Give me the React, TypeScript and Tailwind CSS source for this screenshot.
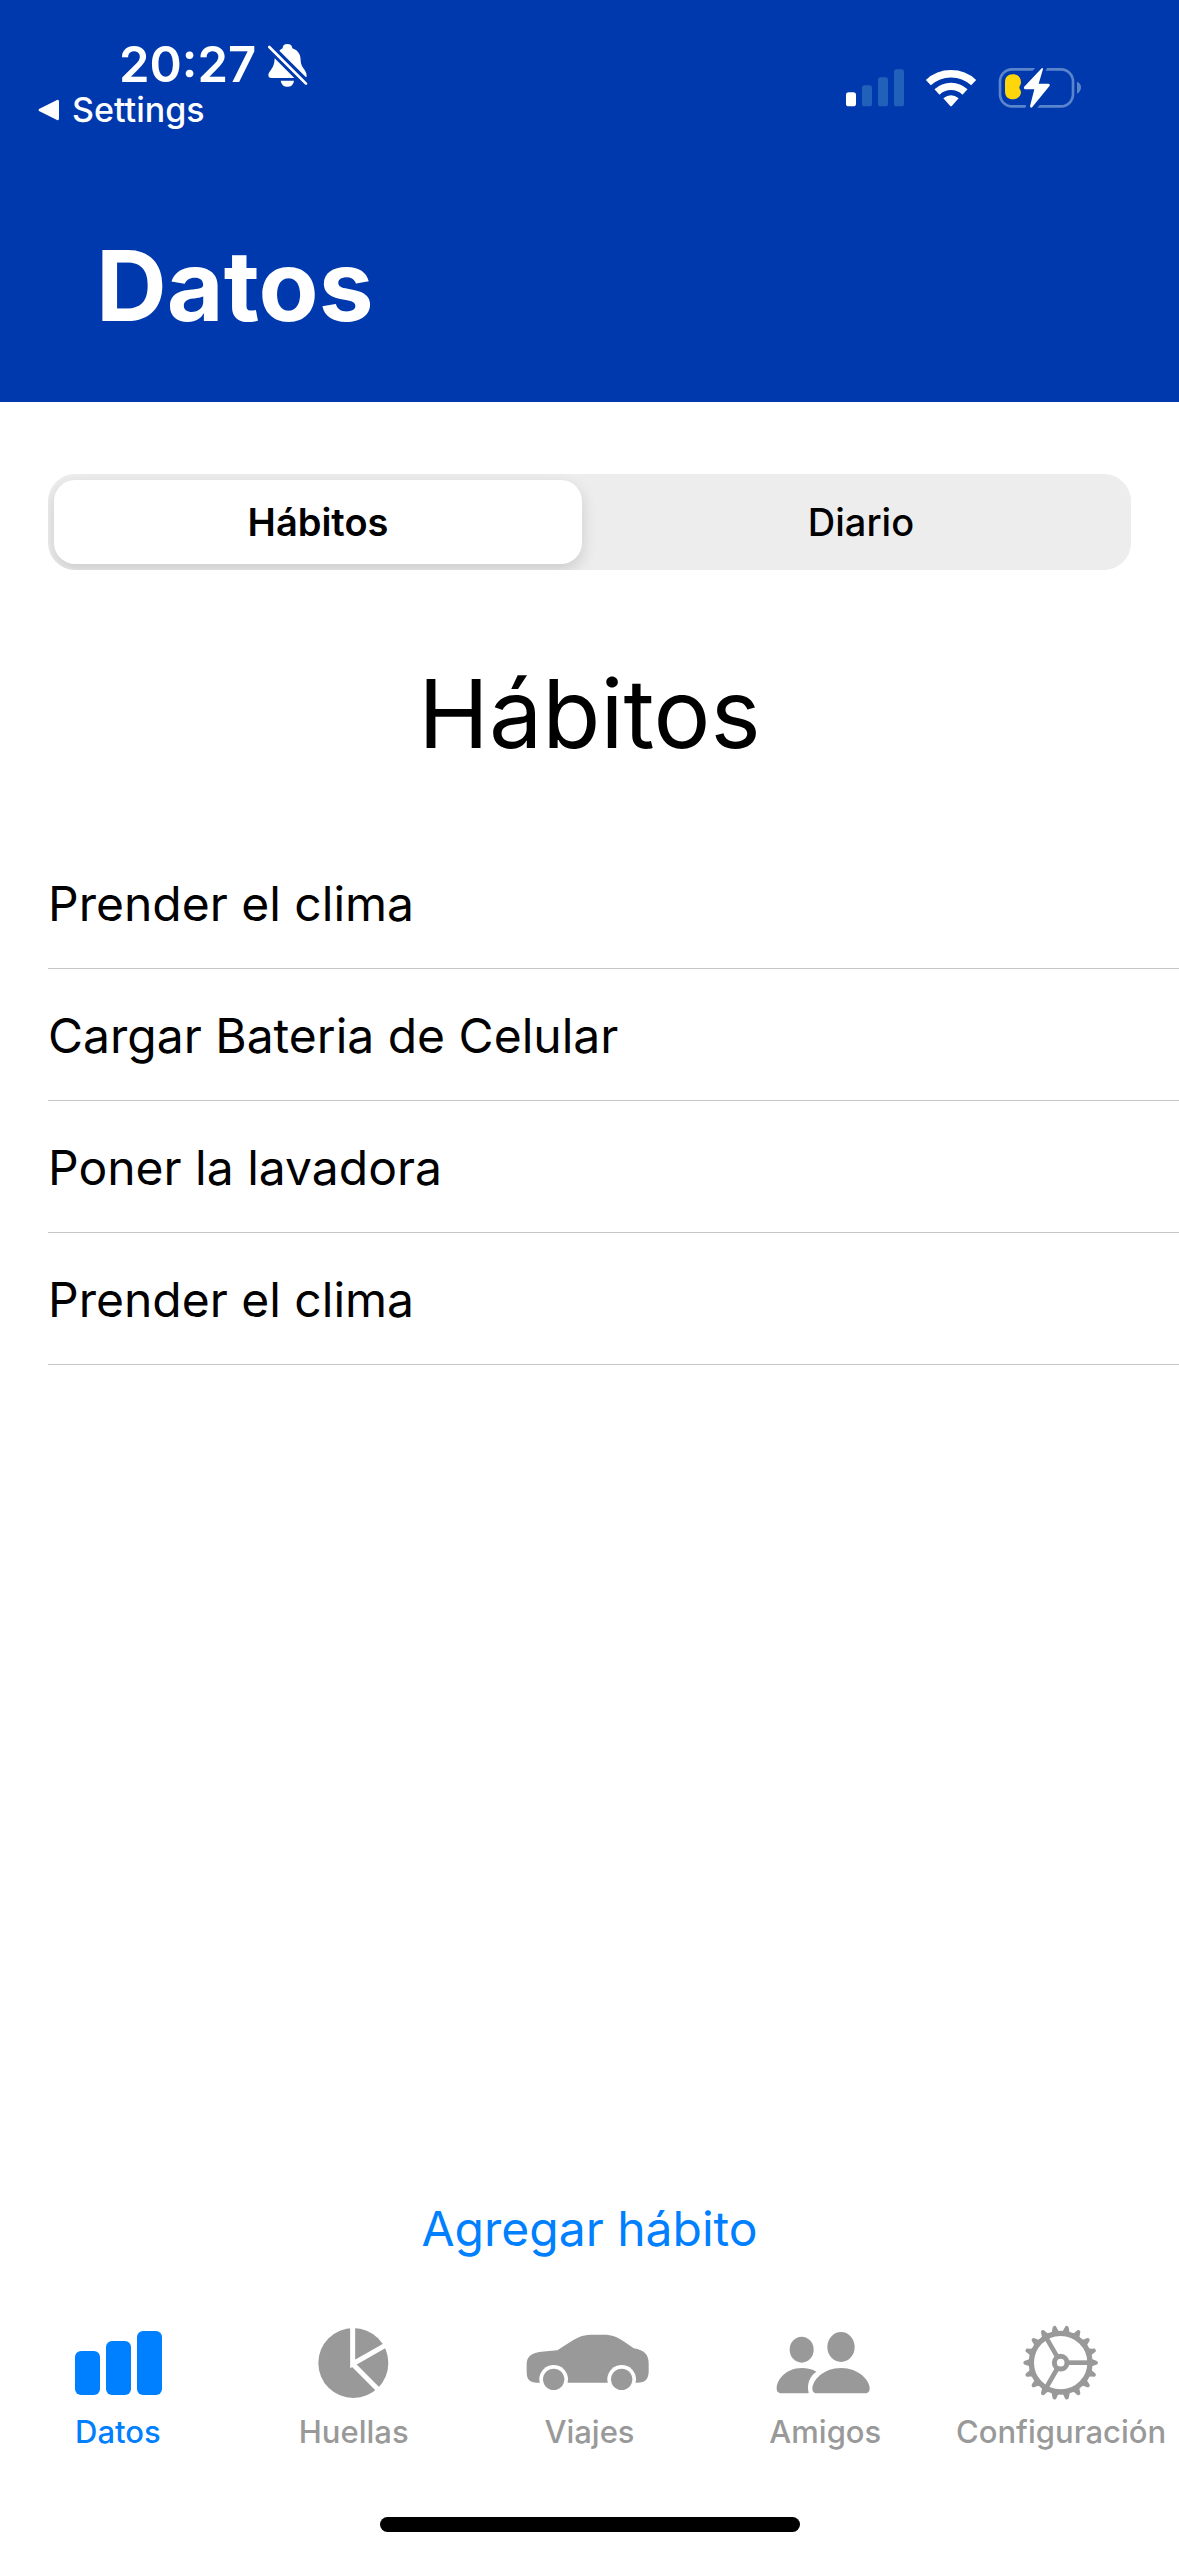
import { useState } from "react";
import type { ReactNode } from "react";

const HEADER_BLUE = "#0039ad";

function BellOffIcon() {
  return (
    <svg viewBox="800 66 129 138" className="h-[46px] w-[43px]" fill="currentColor" aria-hidden="true">
      <path d="M840 92Q845 87 850 85Q850 72 864 72Q878 72 879 85C898 92 904 105 904 122C905 145 922 148 922 168Q922 171 920 172Z" />
      <path d="M826 115L885 174H816Q807 174 807 165C808 152 825 148 826 115Z" />
      <path d="M844 182H884Q882 200 864 200Q847 200 844 182Z" />
      <path d="M810 81L920 191" stroke="currentColor" strokeWidth="8" strokeLinecap="round" />
    </svg>
  );
}

function SignalIcon() {
  return (
    <svg viewBox="78 50 174 126" className="h-[42px] w-[58px]" role="img" aria-label="Señal móvil">
      <rect x="78" y="126" width="30" height="42" rx="8" fill="#fff" />
      <g fill="#2161b9">
        <rect x="126" y="105" width="30" height="63" rx="8" />
        <rect x="174" y="81" width="30" height="87" rx="8" />
        <rect x="222" y="57" width="30" height="111" rx="8" />
      </g>
    </svg>
  );
}

function WifiIcon() {
  return (
    <svg viewBox="316 50 156 126" className="h-[42px] w-[52px]" role="img" aria-label="Wi-Fi">
      <g fill="none" stroke="#fff" strokeWidth="22">
        <path d="M326 97A100 100 0 0 1 462 97" />
        <path d="M352 125A61 61 0 0 1 436 125" />
      </g>
      <path d="M371 144Q394 125 417 144L397 166Q394 169 391 166Z" fill="#fff" />
    </svg>
  );
}

function BatteryIcon() {
  const bolt = "M665 54L612 110Q610 115 615 117H643L630 168Q632 175 637 170L689 106Q691 101 686 100H656L669 56Q668 52 665 54Z";
  return (
    <svg viewBox="534 50 252 126" className="h-[42px] w-[84px]" role="img" aria-label="Batería cargando">
      <rect x="540" y="57" width="219" height="111" rx="36" fill="none" stroke="#5a85cc" strokeWidth="8" />
      <path d="M771 94Q783 99 783 111Q783 124 771 130Z" fill="#5a85cc" />
      <path d="M579 72C594 72 603 82 603 96C603 104 598 106 598 112C598 117 603 118 603 126C602 138 593 147 579 147C563 147 555 138 555 122V97C555 81 563 72 579 72Z" fill="#ffd60a" />
      <g fill={HEADER_BLUE}>
        <path d="M648 50H682L676 64H636Z" />
        <path d="M619 160H662L650 175H616Z" />
      </g>
      <path d={bolt} fill="#fff" />
    </svg>
  );
}

function BarsIcon() {
  return (
    <svg viewBox="24 72 360 240" className="h-20 w-[120px]" fill="currentColor" aria-hidden="true">
      <rect x="75" y="153" width="75" height="132" rx="18" />
      <rect x="168" y="123" width="75" height="162" rx="18" />
      <rect x="261" y="93" width="75" height="192" rx="18" />
    </svg>
  );
}

function PieIcon() {
  return (
    <svg viewBox="731 72 360 240" className="h-20 w-[120px]" fill="currentColor" aria-hidden="true">
      <circle cx="909" cy="189" r="105" />
      <path d="M907 75V192L1010 133M907 192L990 275" fill="none" stroke="#fff" strokeWidth="15" />
    </svg>
  );
}

function CarIcon() {
  return (
    <svg viewBox="58 72 420 240" className="h-20 w-[140px]" fill="currentColor" aria-hidden="true">
      <path d="M81 192C81 168 98 158 125 155L173 151L215 124C240 108 252 104 285 104H310C340 104 352 110 375 126L402 145C435 150 447 165 447 190V213C447 238 437 248 413 248H112C91 248 81 239 81 216Z" />
      <circle cx="162" cy="238" r="43" fill="#fff" />
      <circle cx="366" cy="238" r="43" fill="#fff" />
      <circle cx="162" cy="238" r="32" />
      <circle cx="366" cy="238" r="32" />
    </svg>
  );
}

function PeopleIcon() {
  return (
    <svg viewBox="796 72 360 240" className="h-20 w-[120px]" fill="currentColor" aria-hidden="true">
      <ellipse cx="906" cy="149" rx="36" ry="39" />
      <ellipse cx="1024" cy="141" rx="41" ry="45" />
      <path d="M906 204Q932 204 950 215Q918 238 927 280H849Q831 280 831 266C831 238 860 204 906 204Z" />
      <path d="M1024 204C1078 204 1110 242 1110 266Q1110 280 1093 280H954Q938 280 938 266C938 242 970 204 1024 204Z" />
    </svg>
  );
}

function GearIcon() {
  const teeth = Array.from({ length: 18 }, (_, i) => i * 20);
  return (
    <svg viewBox="-179 -116 360 240" className="h-20 w-[120px]" fill="currentColor" aria-hidden="true">
      {teeth.map((angle) => (
        <path
          key={angle}
          transform={`rotate(${angle})`}
          d="M88 -16Q93 -9 107 -6Q112 -5 112 0Q112 5 107 6Q93 9 88 16Z"
        />
      ))}
      <g fill="none" stroke="currentColor">
        <circle r="88" strokeWidth="16" />
        <circle r="19" strokeWidth="15" />
        {[0, 120, 240].map((angle) => (
          <path key={angle} transform={`rotate(${angle})`} d="M22 0H86" strokeWidth="14" />
        ))}
      </g>
    </svg>
  );
}

const habits = ["Prender el clima", "Cargar Bateria de Celular", "Poner la lavadora", "Prender el clima"];

const tabs: { label: string; icon: ReactNode }[] = [
  { label: "Datos", icon: <BarsIcon /> },
  { label: "Huellas", icon: <PieIcon /> },
  { label: "Viajes", icon: <CarIcon /> },
  { label: "Amigos", icon: <PeopleIcon /> },
  { label: "Configuración", icon: <GearIcon /> },
];

const segments = ["Hábitos", "Diario"];

export default function App() {
  const [segment, setSegment] = useState("Hábitos");

  return (
    <div className="flex min-h-screen flex-col bg-white font-['Inter',sans-serif] text-black">
      <header className="bg-[#0039ad] pb-14 text-white">
        <div className="flex items-start justify-between pr-[97px]">
          <div className="pt-10">
            <div className="flex items-center gap-2.5 pl-[119px]">
              <time className="text-[49px] leading-[50px] font-semibold">20:27</time>
              <BellOffIcon />
            </div>
            <a href="#settings" className="flex items-center gap-3 pl-[38px] text-[34px] leading-10 font-medium">
              <svg viewBox="0 0 22 22" className="size-[22px]" fill="currentColor" aria-hidden="true">
                <path d="M1 10L19 1Q21 0 21 3V19Q21 22 19 21L1 12Q0 11 1 10Z" />
              </svg>
              Settings
            </a>
          </div>
          <div className="flex gap-[21px] pt-[67px]">
            <SignalIcon />
            <WifiIcon />
            <BatteryIcon />
          </div>
        </div>
        <h1 className="mt-24 pl-24 text-[98px] leading-[120px] font-bold">Datos</h1>
      </header>

      <main className="flex flex-1 flex-col pt-[72px]">
        <div role="tablist" className="mx-12 flex gap-[15px] overflow-hidden rounded-[27px] bg-[#ededee] p-1.5">
          {segments.map((name) => (
            <button
              key={name}
              type="button"
              role="tab"
              aria-selected={segment === name}
              onClick={() => setSegment(name)}
              className={
                segment === name
                  ? "h-[84px] flex-1 rounded-[21px] bg-white text-[38px] font-semibold shadow-[0_6px_16px_rgba(0,0,0,0.14)]"
                  : "h-[84px] flex-1 rounded-[21px] text-[38px] font-medium"
              }
            >
              {name}
            </button>
          ))}
        </div>

        <h2 className="mt-[84px] text-center text-[95px] leading-[120px]">Hábitos</h2>

        <ul className="mt-[63px] flex-1 pl-12 text-[48px]">
          {habits.map((habit, index) => (
            <li key={index} className="flex h-33 items-center border-b border-[#c6c6c8] pt-0.5">
              {habit}
            </li>
          ))}
        </ul>

        <button type="button" className="self-center text-[48px] leading-[68px] text-[#007fff]">
          Agregar hábito
        </button>
      </main>

      <nav className="mt-[61px] grid grid-cols-5">
        {tabs.map(({ label, icon }, index) => (
          <button
            key={label}
            type="button"
            aria-current={index === 0 ? "page" : undefined}
            className={
              index === 0
                ? "flex flex-col items-center gap-2.5 text-[31px] leading-9 font-medium text-[#007fff]"
                : "flex flex-col items-center gap-2.5 text-[31px] leading-9 font-medium text-[#999999]"
            }
          >
            {icon}
            {label}
          </button>
        ))}
      </nav>

      <div className="flex justify-center pt-[67px] pb-6">
        <div className="h-[15px] w-[420px] rounded-full bg-black" />
      </div>
    </div>
  );
}
